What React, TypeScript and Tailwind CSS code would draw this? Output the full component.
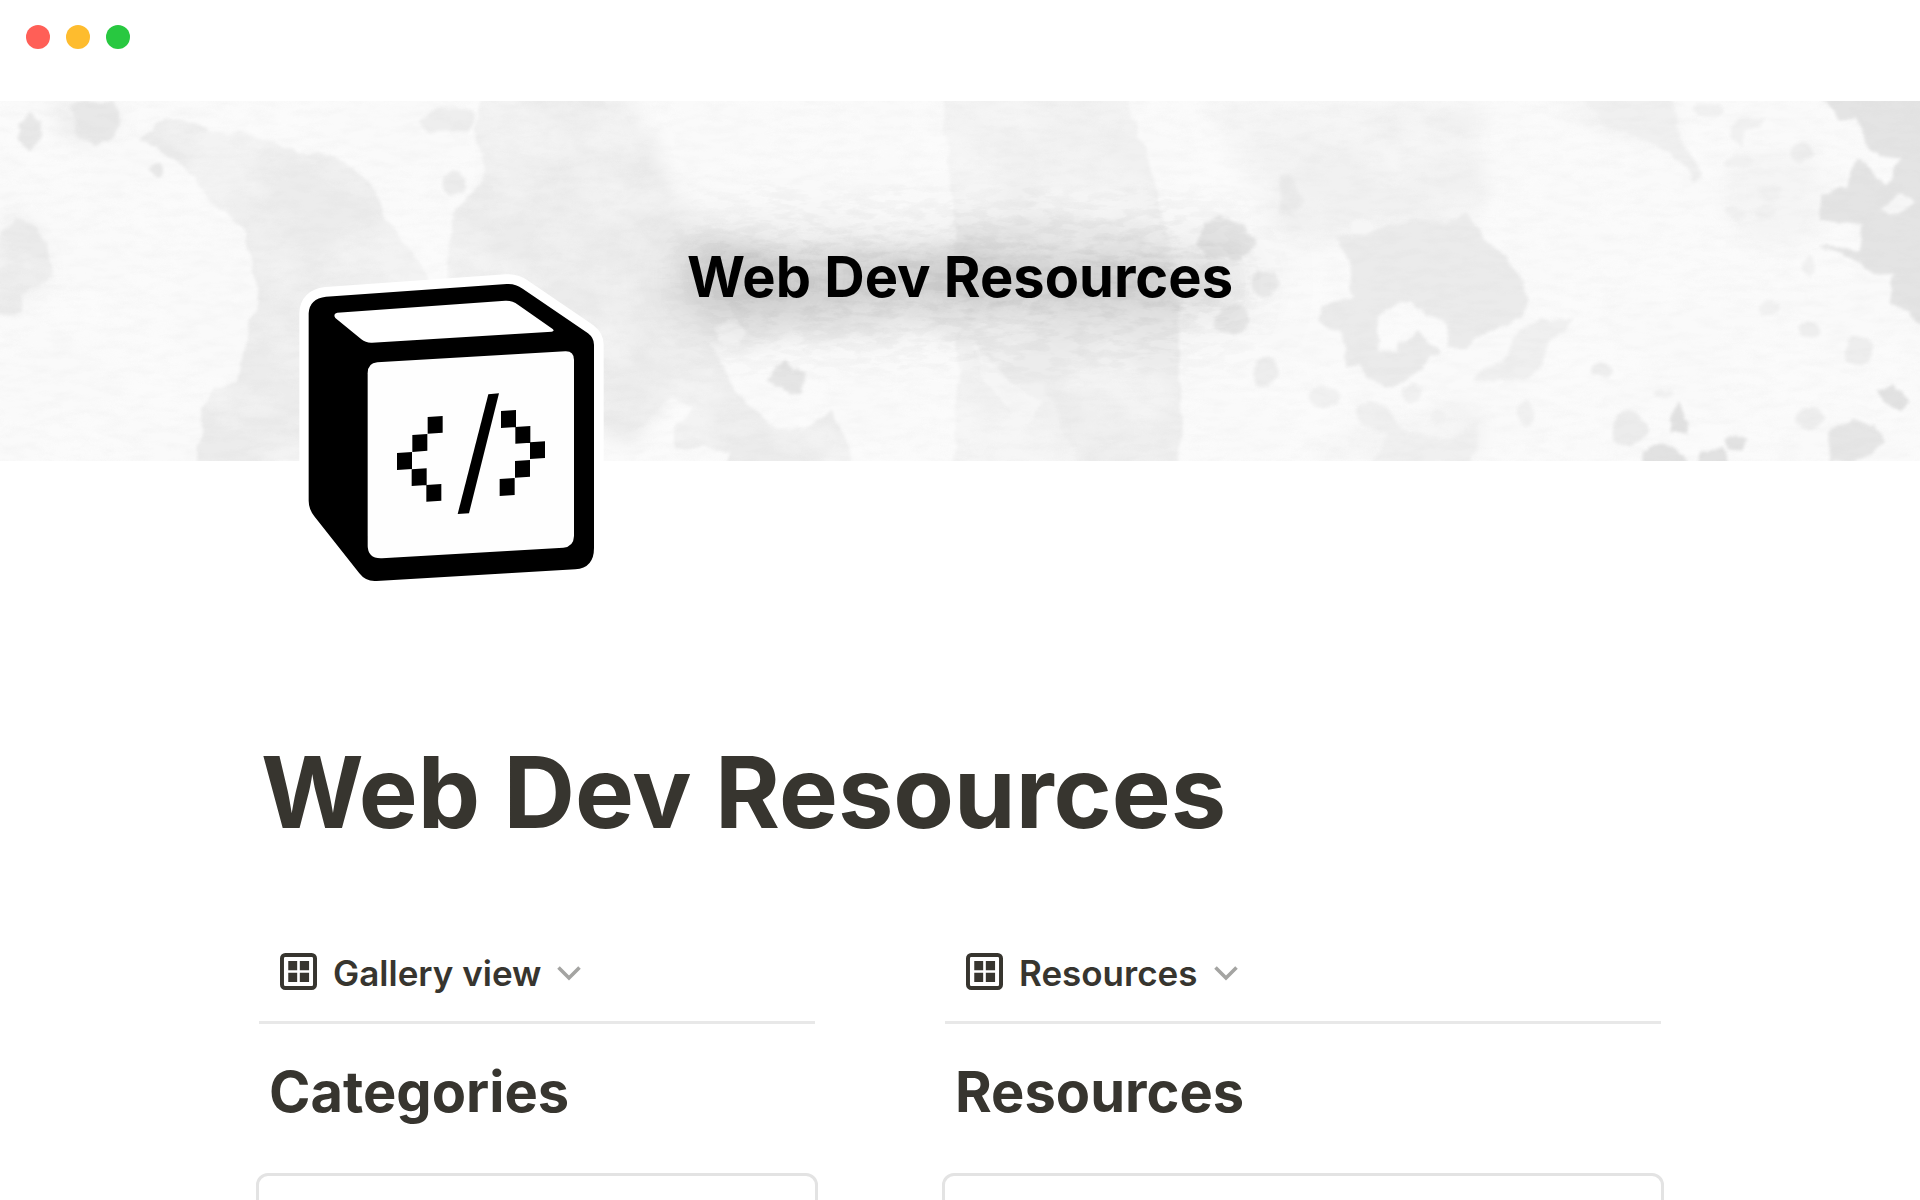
import type { ReactNode } from 'react'

function WindowControls() {
	return (
		<header className="flex h-[101px] items-start gap-4 px-[26px] pt-[25px]">
			<span className="h-6 w-6 rounded-full bg-[#ff5f57]" />
			<span className="h-6 w-6 rounded-full bg-[#febc2e]" />
			<span className="h-6 w-6 rounded-full bg-[#28c840]" />
		</header>
	)
}

// Watercolour paper: flat shapes with roughened edges under a fine grain
function PaperTexture() {
	return (
		<svg
			className="absolute inset-0 h-full w-full"
			viewBox="0 0 1920 360"
			preserveAspectRatio="xMidYMid slice"
			aria-hidden="true"
		>
			<defs>
				<filter id="torn" x="0" y="0" width="1940" height="380" filterUnits="userSpaceOnUse">
					<feTurbulence type="fractalNoise" baseFrequency="0.05" numOctaves="4" seed="4" />
					<feDisplacementMap in="SourceGraphic" scale="11" xChannelSelector="R" yChannelSelector="G" />
					<feGaussianBlur stdDeviation="1.5" />
				</filter>
				<filter id="soft" x="0" y="0" width="1920" height="360" filterUnits="userSpaceOnUse">
					<feTurbulence type="fractalNoise" baseFrequency="0.02" numOctaves="4" seed="9" />
					<feDisplacementMap in="SourceGraphic" scale="40" xChannelSelector="R" yChannelSelector="G" />
					<feGaussianBlur stdDeviation="9" />
				</filter>
				<filter id="clouds" x="0" y="0" width="100%" height="100%">
					<feTurbulence type="fractalNoise" baseFrequency="0.011 0.016" numOctaves="5" seed="12" />
					<feColorMatrix values="0 0 0 0 0.98  0 0 0 0 0.98  0 0 0 0 0.98  3 0 0 0 -1.2" />
				</filter>
				<filter id="grain" x="0" y="0" width="100%" height="100%">
					<feTurbulence type="fractalNoise" baseFrequency="0.04 0.12" numOctaves="4" seed="2" />
					<feColorMatrix values="0 0 0 0 0.55  0 0 0 0 0.55  0 0 0 0 0.55  0.5 0 0 0 -0.2" />
				</filter>
			</defs>
			<rect width="1920" height="360" fill="#fafafa" />

			<g filter="url(#soft)" fill="#f1f1f1">
				<path d="M50 0H128L120 30L80 50L55 30Z" />
				<path d="M490 0H640L660 60L700 120L780 150L1160 140V240L780 230L700 260L640 340L560 300L470 220Z" fill="#ebebeb" />
				<path d="M1215 0H1480V90L1470 140L1400 130L1320 150L1230 60Z" />
				<path d="M1540 0H1670L1680 50L1600 30Z" />
				<path d="M1310 340L1400 320L1475 300V360H1310Z" />
				<path d="M0 120L40 130L50 180L20 210H0Z" />
				<ellipse cx="1290" cy="100" rx="24" ry="30" />
				<ellipse cx="1775" cy="100" rx="60" ry="50" fill="#f5f5f5" />
			</g>

			<g filter="url(#torn)" transform="translate(-6 -6)">
				<g fill="#ececec">
					<path d="M146 46L170 21L199 26L223 39L252 39L293 53L342 63L378 89L391 119L403 139L431 173L437 197V367H203L207 323L219 293L244 289L252 239L264 206L256 159L248 136L215 103L195 76Z" />
					<path d="M489 0L480 33L485 59L489 86L480 96L460 113L456 153L452 183L470 220L600 310L616 327L640 336L677 303L700 313L680 329V351L735 357V370H861L838 316L807 333L782 333L741 296L716 249L720 229L690 180L640 130L620 60L610 0Z" />
					<path d="M0 145L22 125L39 132L55 148L59 182L30 198V218L0 222Z" fill="#ebebeb" />
					<path d="M948 0H1132L1152 63L1164 96L1173 129L1185 209L1187 249L1185 370H960L964 249L962 143Z" fill="#f1f1f1" />
					<path d="M962 130L1060 120L1170 130L1187 249L1185 370H1086L1050 289L1013 289L981 247L964 249Z" fill="#ededed" />
				</g>
			</g>

			<rect width="1920" height="360" filter="url(#clouds)" opacity="0.45" />

			<g filter="url(#torn)" transform="translate(-6 -6)">
				<g fill="#e8e8e8">
					<path d="M78 8H118L128 24L120 42L100 50L82 40Z" />
					<path d="M37 18L47 28L46 42L36 54L24 44L26 28Z" />
					<circle cx="163" cy="74" r="6" />
					<circle cx="462" cy="88" r="12" fill="#ececec" />
					<path d="M426 26L446 11L481 18L476 34L436 38Z" fill="#eeeeee" />
					<path d="M788 264L796 276L812 281L806 298L794 300L774 286Z" fill="#e6e6e6" />
					<path d="M1208 128L1228 120L1250 130L1262 148L1246 166L1218 164L1204 148Z" />
					<circle cx="1271" cy="188" r="13" fill="#ececec" />
					<ellipse cx="1238" cy="226" rx="16" ry="13" fill="#ececec" />
					<circle cx="1272" cy="276" r="13" fill="#eeeeee" />
				</g>

				<g transform="translate(1286 -5) scale(0.408 0.333)" fill="#ebebeb">
					<path d="M130 450L200 430L330 390L400 400L460 370L500 440L540 480L590 560L610 640L600 680L480 740L460 780L410 770V700L340 660L320 630L240 680V780L290 790V760L340 730L390 780L350 840L260 900L230 880L200 830H160L150 720L90 700L100 660L180 620L170 510Z" />
					<path d="M570 740L640 690L720 690L670 740L630 830L610 870L470 875L500 830L560 800Z" fill="#f0f0f0" />
					<path d="M730 20H960L980 150L1040 250L1020 280L980 210L910 160L820 120Z" fill="#f0f0f0" />
					<path d="M1290 0L1380 90L1410 90L1440 160L1470 200L1520 210L1500 260L1480 280L1410 200L1385 290L1330 310L1320 390L1430 410L1420 480L1320 460L1420 520L1450 550L1505 550L1495 640L1600 720V0Z" fill="#e4e4e4" />
					<path d="M0 250L40 270L60 340L40 370H0Z" />
					<path d="M190 960L220 930L270 970L300 1030L420 1050L490 990L470 1120H230L260 1030L200 1000Z" fill="#f0f0f0" />
				</g>
				<g transform="translate(1286 -5) scale(0.408 0.333)" fill="#f1f1f1">
					<ellipse cx="1050" cy="60" rx="32" ry="24" />
					<ellipse cx="1280" cy="190" rx="28" ry="28" fill="#eeeeee" />
					<ellipse cx="1125" cy="215" rx="38" ry="20" />
					<path d="M1100 140L1130 90L1190 80L1140 130L1130 170Z" />
					<ellipse cx="1200" cy="310" rx="26" ry="30" />
					<ellipse cx="1115" cy="365" rx="26" ry="26" />
					<ellipse cx="1190" cy="370" rx="24" ry="20" />
					<ellipse cx="1295" cy="530" rx="16" ry="30" />
					<ellipse cx="1195" cy="655" rx="30" ry="22" />
					<ellipse cx="1297" cy="722" rx="26" ry="28" fill="#eeeeee" />
					<ellipse cx="1418" cy="780" rx="32" ry="44" fill="#eeeeee" />
					<ellipse cx="790" cy="840" rx="26" ry="26" fill="#eeeeee" />
					<ellipse cx="603" cy="970" rx="20" ry="42" />
					<ellipse cx="940" cy="910" rx="24" ry="14" />
					<ellipse cx="855" cy="1015" rx="42" ry="58" fill="#ececec" />
					<ellipse cx="1300" cy="985" rx="34" ry="36" fill="#eeeeee" />
					<ellipse cx="110" cy="920" rx="38" ry="32" />
					<ellipse cx="320" cy="912" rx="26" ry="26" />
					<ellipse cx="390" cy="978" rx="18" ry="18" />
				</g>
				<g transform="translate(1286 -5) scale(0.408 0.333)" fill="#e2e2e2">
					<path d="M885 1125L895 1080L940 1062L975 1090L1000 1125Z" />
					<path d="M955 980L975 940L1000 990L1003 1035L955 1025Z" />
					<path d="M1020 1125L1030 1080L1085 1075L1095 1125Z" />
					<path d="M1090 1050L1120 1038L1150 1050L1145 1090L1095 1085Z" />
					<path d="M1465 900L1495 880L1545 940L1525 965L1470 935Z" />
					<path d="M1345 1120L1350 1020L1400 992L1455 1010L1480 1055L1450 1090L1400 1120Z" fill="#e6e6e6" />
				</g>
				<g fill="#f6f6f6">
					<path d="M981 248L1013 288L1050 308L1026 338L1001 355L1004 331L1018 316L991 286Z" />
					<path d="M1886 114L1906 98L1921 106L1906 116L1894 122Z" />
					<ellipse cx="1367" cy="131" rx="12" ry="9" />
					<path d="M722 232L745 222L752 240L742 256L724 248Z" />
				</g>
			</g>

			<rect width="1920" height="360" filter="url(#grain)" opacity="0.3" />
		</svg>
	)
}

function Cover({ children }: { children: ReactNode }) {
	return (
		<div className="relative flex h-[360px] items-center justify-center overflow-hidden">
			<PaperTexture />
			<p className="relative pb-2 text-[56px] leading-[68px] font-bold text-black [text-shadow:0_0_80px_rgba(0,0,0,0.6),0_0_40px_rgba(0,0,0,0.2)]">
				{children}
			</p>
		</div>
	)
}

function CubeIcon() {
	return (
		<svg
			className="relative -mt-[201px] ml-6 h-[340px] w-[340px]"
			viewBox="0 0 1020 1020"
			role="img"
			aria-label="Code cube"
		>
			<path
				d="M138 110L680 72Q706 70 728 86L924 220Q942 234 942 254V864Q942 924 886 928L290 963Q258 966 238 940L104 770Q87 748 87 722V160Q88 116 138 110Z"
				stroke="#fff"
				strokeWidth="58"
				strokeLinejoin="round"
				fill="#fff"
			/>
			<path d="M138 110L680 72Q706 70 728 86L924 220Q942 234 942 254V864Q942 924 886 928L290 963Q258 966 238 940L104 770Q86 748 86 722V160Q88 116 138 110Z" />
			<path
				d="M172 158L676 122Q698 121 714 134L818 207Q825 214 815 215L276 248Q258 249 244 238L166 174Q158 162 172 158Z"
				fill="#fff"
			/>
			<path
				d="M292 307L856 274Q882 273 882 300V828Q881 860 850 863L306 895Q263 897 263 856V340Q263 309 292 307Z"
				fill="#fefefe"
			/>
			<path d="M625 403L657 400L567 760L533 762Z" />
			<path d="M443 471L488 468V518L443 521ZM397 525L442 522V572L397 576ZM351 579L396 576V627L351 630ZM395 628L440 625V675L395 678ZM439 675L484 672V722L439 725Z" />
			<path d="M663 453L708 450V501L663 504ZM706 501L751 498V548L706 551ZM750 547L795 544V594L750 597ZM705 603L750 600V650L705 653ZM659 657L704 654V705L659 708Z" />
		</svg>
	)
}

function GalleryIcon() {
	return (
		<svg className="h-[37px] w-[37px]" viewBox="0 0 112 112" fill="currentColor" aria-hidden="true">
			<rect x="6" y="6" width="100" height="100" rx="10" fill="none" stroke="currentColor" strokeWidth="12" />
			<path d="M25 24h27v28h-27zM60 24h28v28h-28zM25 60h27v28h-27zM60 60h28v28h-28z" />
		</svg>
	)
}

function ChevronIcon() {
	return (
		<svg className="h-4 w-6" viewBox="0 0 24 16" fill="none" aria-hidden="true">
			<path d="M1.500 2.500l10.500 10.500l10.500-10.500" stroke="#a4a4a2" strokeWidth="3.600" />
		</svg>
	)
}

function DatabaseView({ view, title }: { view: string; title: string }) {
	return (
		<section>
			<div className="mx-[3px] border-b-[3px] border-[#e8e8e8] pb-[23px]">
				<button type="button" className="flex items-center px-[21px] text-[35px] leading-[50px] font-semibold">
					<span className="pb-1">
						<GalleryIcon />
					</span>
					<span className="ml-4">{view}</span>
					<span className="ml-4">
						<ChevronIcon />
					</span>
				</button>
			</div>
			<h2 className="mt-8 px-[13px] text-[56px] leading-[72px] font-bold">{title}</h2>
			<div className="mt-[45px] h-60 rounded-xl border-[3px] border-[#e3e3e3]" />
		</section>
	)
}

export default function App() {
	return (
		<div className="h-screen overflow-hidden bg-white font-['Inter','Liberation_Sans',sans-serif] text-[#37352f]">
			<WindowControls />
			<Cover>Web Dev Resources</Cover>
			<main className="px-64">
				<CubeIcon />
				<h1 className="mt-[130px] px-[5px] text-[99px] leading-[125px] font-bold">Web Dev Resources</h1>
				<div className="mt-[93px] grid grid-cols-[562fr_722fr] gap-[124px]">
					<DatabaseView view="Gallery view" title="Categories" />
					<DatabaseView view="Resources" title="Resources" />
				</div>
			</main>
		</div>
	)
}
